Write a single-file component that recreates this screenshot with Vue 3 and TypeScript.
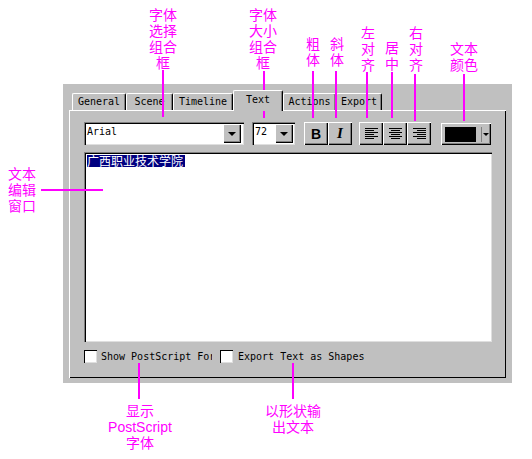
<script setup lang="ts">
interface Callout {
  lines: string[]
  x: number
  y: number
}
interface Leader {
  x: number
  y: number
  w: number
  h: number
}

const tabs = [
  { name: 'General', width: 54 },
  { name: 'Scene', width: 47 },
  { name: 'Timeline', width: 60 },
  { name: 'Text', width: 50, active: true },
  { name: 'Actions', width: 53 },
  { name: 'Export', width: 46 },
]

// centre x and top y of every magenta note
const callouts: Callout[] = [
  { lines: ['字体', '选择', '组合', '框'], x: 163, y: 7 },
  { lines: ['字体', '大小', '组合', '框'], x: 263, y: 7 },
  { lines: ['粗', '体'], x: 313, y: 36 },
  { lines: ['斜', '体'], x: 337, y: 36 },
  { lines: ['左', '对', '齐'], x: 368, y: 25 },
  { lines: ['居', '中'], x: 392, y: 40 },
  { lines: ['右', '对', '齐'], x: 416, y: 25 },
  { lines: ['文本', '颜色'], x: 464, y: 41 },
  { lines: ['文本', '编辑', '窗口'], x: 22, y: 166 },
  { lines: ['显示', 'PostScript', '字体'], x: 140, y: 403 },
  { lines: ['以形状输', '出文本'], x: 293, y: 403 },
]

const leaders: Leader[] = [
  { x: 162, y: 70, w: 2, h: 47 },
  { x: 263, y: 71, w: 2, h: 47 },
  { x: 312, y: 71, w: 2, h: 47 },
  { x: 335, y: 71, w: 2, h: 47 },
  { x: 366, y: 72, w: 2, h: 46 },
  { x: 391, y: 72, w: 2, h: 46 },
  { x: 414, y: 74, w: 2, h: 47 },
  { x: 463, y: 74, w: 2, h: 47 },
  { x: 41, y: 189, w: 62, h: 2 },
  { x: 138, y: 363, w: 2, h: 36 },
  { x: 292, y: 363, w: 2, h: 36 },
]

const alignLeft = [
  [2, 15],
  [2, 11],
  [2, 15],
  [2, 11],
  [2, 15],
  [2, 11],
]
const alignCenter = [
  [2, 15],
  [4, 13],
  [2, 15],
  [4, 13],
  [2, 15],
  [4, 13],
]
const alignRight = [
  [2, 15],
  [6, 15],
  [2, 15],
  [6, 15],
  [2, 15],
  [6, 15],
]
const aligns = [alignLeft, alignCenter, alignRight]
</script>

<template>
  <div class="stage">
    <div class="panel">
      <div class="tabs">
        <div
          v-for="tab in tabs"
          :key="tab.name"
          class="tab"
          :class="{ active: tab.active }"
          :style="{ width: tab.width + 'px' }">
          {{ tab.name }}
        </div>
      </div>

      <div class="page">
        <div class="toolbar">
          <div class="combo font-combo">
            <span class="combo-value">Arial</span>
            <div class="drop raised"><i class="arrow"></i></div>
          </div>
          <div class="combo size-combo">
            <span class="combo-value">72</span>
            <div class="drop raised"><i class="arrow"></i></div>
          </div>
          <div class="btn-group style-group">
            <div class="btn raised bold">B</div>
            <div class="btn raised italic">I</div>
          </div>
          <div class="btn-group align-group">
            <div v-for="(rows, i) in aligns" :key="i" class="btn raised">
              <svg width="16" height="13" viewBox="0 0 16 13">
                <line
                  v-for="(r, j) in rows"
                  :key="j"
                  :x1="r[0]"
                  :x2="r[1]"
                  :y1="j * 2 + 1.5"
                  :y2="j * 2 + 1.5"
                  stroke="#000"
                  stroke-width="1" />
              </svg>
            </div>
          </div>
          <div class="color raised">
            <div class="swatch"></div>
            <div class="divider"></div>
            <i class="arrow small"></i>
          </div>
        </div>

        <div class="editor">
          <span class="selection">广西职业技术学院</span>
        </div>

        <div class="options">
          <div class="check first">
            <span class="box"></span>
            <span class="check-label">Show PostScript For</span>
          </div>
          <div class="check">
            <span class="box"></span>
            <span class="check-label">Export Text as Shapes</span>
          </div>
        </div>
      </div>
    </div>

    <div
      v-for="(c, i) in callouts"
      :key="'c' + i"
      class="note"
      :style="{ left: c.x - 50 + 'px', top: c.y + 'px' }">
      <div v-for="line in c.lines" :key="line">{{ line }}</div>
    </div>
    <div
      v-for="(l, i) in leaders"
      :key="'l' + i"
      class="leader"
      :style="{
        left: l.x + 'px',
        top: l.y + 'px',
        width: l.w + 'px',
        height: l.h + 'px',
      }"></div>
  </div>
</template>

<style scoped>
  .stage {
    position: relative;
    width: 532px;
    height: 459px;
    padding: 84px 0 0 63px;
    box-sizing: border-box;
    background: #fff;
    overflow: hidden;
    font-family: 'DejaVu Sans Mono', 'Liberation Mono', monospace;
    font-size: 10px;
    color: #000;
  }
  .panel {
    width: 449px;
    height: 299px;
    padding: 6px 0 0 6px;
    box-sizing: border-box;
    background: #c0c0c0;
  }
  .tabs {
    display: flex;
    height: 20px;
    padding-left: 3px;
    align-items: flex-end;
  }
  .tab {
    height: 17px;
    line-height: 16px;
    text-align: center;
    box-sizing: border-box;
    border-top: 1px solid #fff;
    border-left: 1px solid #fff;
    border-right: 1px solid #000;
    border-radius: 2px 2px 0 0;
    box-shadow: inset -1px 0 0 #808080;
  }
  .tab.active {
    height: 21px;
    margin-bottom: -1px;
    line-height: 17px;
    position: relative;
    z-index: 1;
    background: #c0c0c0;
  }
  .page {
    width: 437px;
    height: 268px;
    padding: 12px 0 0 15px;
    box-sizing: border-box;
    box-shadow:
      inset 1px 1px 0 #fff,
      inset -1px -1px 0 #000;
  }
  .raised {
    box-sizing: border-box;
    background: #c0c0c0;
    box-shadow:
      inset 1px 1px 0 #fff,
      inset -1px -1px 0 #000,
      inset -2px -2px 0 #808080;
  }
  .toolbar {
    display: flex;
    height: 23px;
  }
  .combo {
    display: flex;
    align-items: center;
    justify-content: space-between;
    height: 23px;
    padding: 2px 2px 2px 3px;
    box-sizing: border-box;
    background: #fff;
    box-shadow:
      inset 1px 1px 0 #808080,
      inset 2px 2px 0 #000,
      inset -1px -1px 0 #dfdfdf;
  }
  .font-combo {
    width: 160px;
    padding-right: 3px;
  }
  .size-combo {
    width: 43px;
    margin-left: 8px;
  }
  .combo-value {
    margin-top: -4px;
  }
  .drop {
    display: flex;
    align-items: center;
    justify-content: center;
    width: 18px;
    height: 19px;
  }
  .arrow {
    width: 0;
    height: 0;
    border-left: 4px solid transparent;
    border-right: 4px solid transparent;
    border-top: 4px solid #000;
  }
  .arrow.small {
    margin-left: 1px;
    border-left-width: 3px;
    border-right-width: 3px;
    border-top-width: 3px;
  }
  .btn-group {
    display: flex;
  }
  .style-group {
    margin-left: 9px;
  }
  .align-group {
    margin-left: 7px;
  }
  .btn {
    display: flex;
    align-items: center;
    justify-content: center;
    width: 24px;
    height: 23px;
  }
  .bold {
    font-family: 'Liberation Sans', sans-serif;
    font-size: 14px;
    font-weight: 700;
  }
  .italic {
    font-family: 'Liberation Serif', serif;
    font-size: 15px;
    font-weight: 700;
    font-style: italic;
  }
  .color {
    display: flex;
    align-items: center;
    width: 50px;
    height: 22px;
    margin: 1px 0 0 10px;
    padding-left: 4px;
  }
  .swatch {
    width: 31px;
    height: 15px;
    background: #000;
  }
  .divider {
    width: 1px;
    height: 15px;
    margin-left: 5px;
    background: #808080;
  }
  .editor {
    width: 408px;
    height: 190px;
    margin-top: 7px;
    padding: 3px 0 0 3px;
    box-sizing: border-box;
    background: #fff;
    box-shadow:
      inset 1px 1px 0 #808080,
      inset 2px 2px 0 #000,
      inset -1px -1px 0 #dfdfdf;
  }
  .selection {
    display: block;
    width: 98px;
    height: 12px;
    line-height: 12px;
    background: #000080;
    color: #fff;
    font-family: 'Noto Sans CJK SC', sans-serif;
    font-size: 12px;
  }
  .options {
    display: flex;
    height: 13px;
    margin-top: 8px;
  }
  .check {
    display: flex;
    align-items: center;
  }
  .check.first {
    width: 136px;
  }
  .box {
    flex: none;
    width: 13px;
    height: 13px;
    box-sizing: border-box;
    background: #fff;
    box-shadow:
      inset 1px 1px 0 #000,
      inset -1px -1px 0 #dfdfdf;
  }
  .check-label {
    margin-left: 5px;
    white-space: nowrap;
  }
  .check.first .check-label {
    width: 111px;
    margin-left: 4px;
    overflow: hidden;
  }
  .note {
    position: absolute;
    width: 100px;
    text-align: center;
    color: #f0f;
    font-family: 'Liberation Sans', 'Noto Sans CJK SC', sans-serif;
    font-size: 14px;
    line-height: 16px;
  }
  .leader {
    position: absolute;
    background: #f0f;
  }
</style>

<style>
  html,
  body {
    background: #fff;
  }
</style>
